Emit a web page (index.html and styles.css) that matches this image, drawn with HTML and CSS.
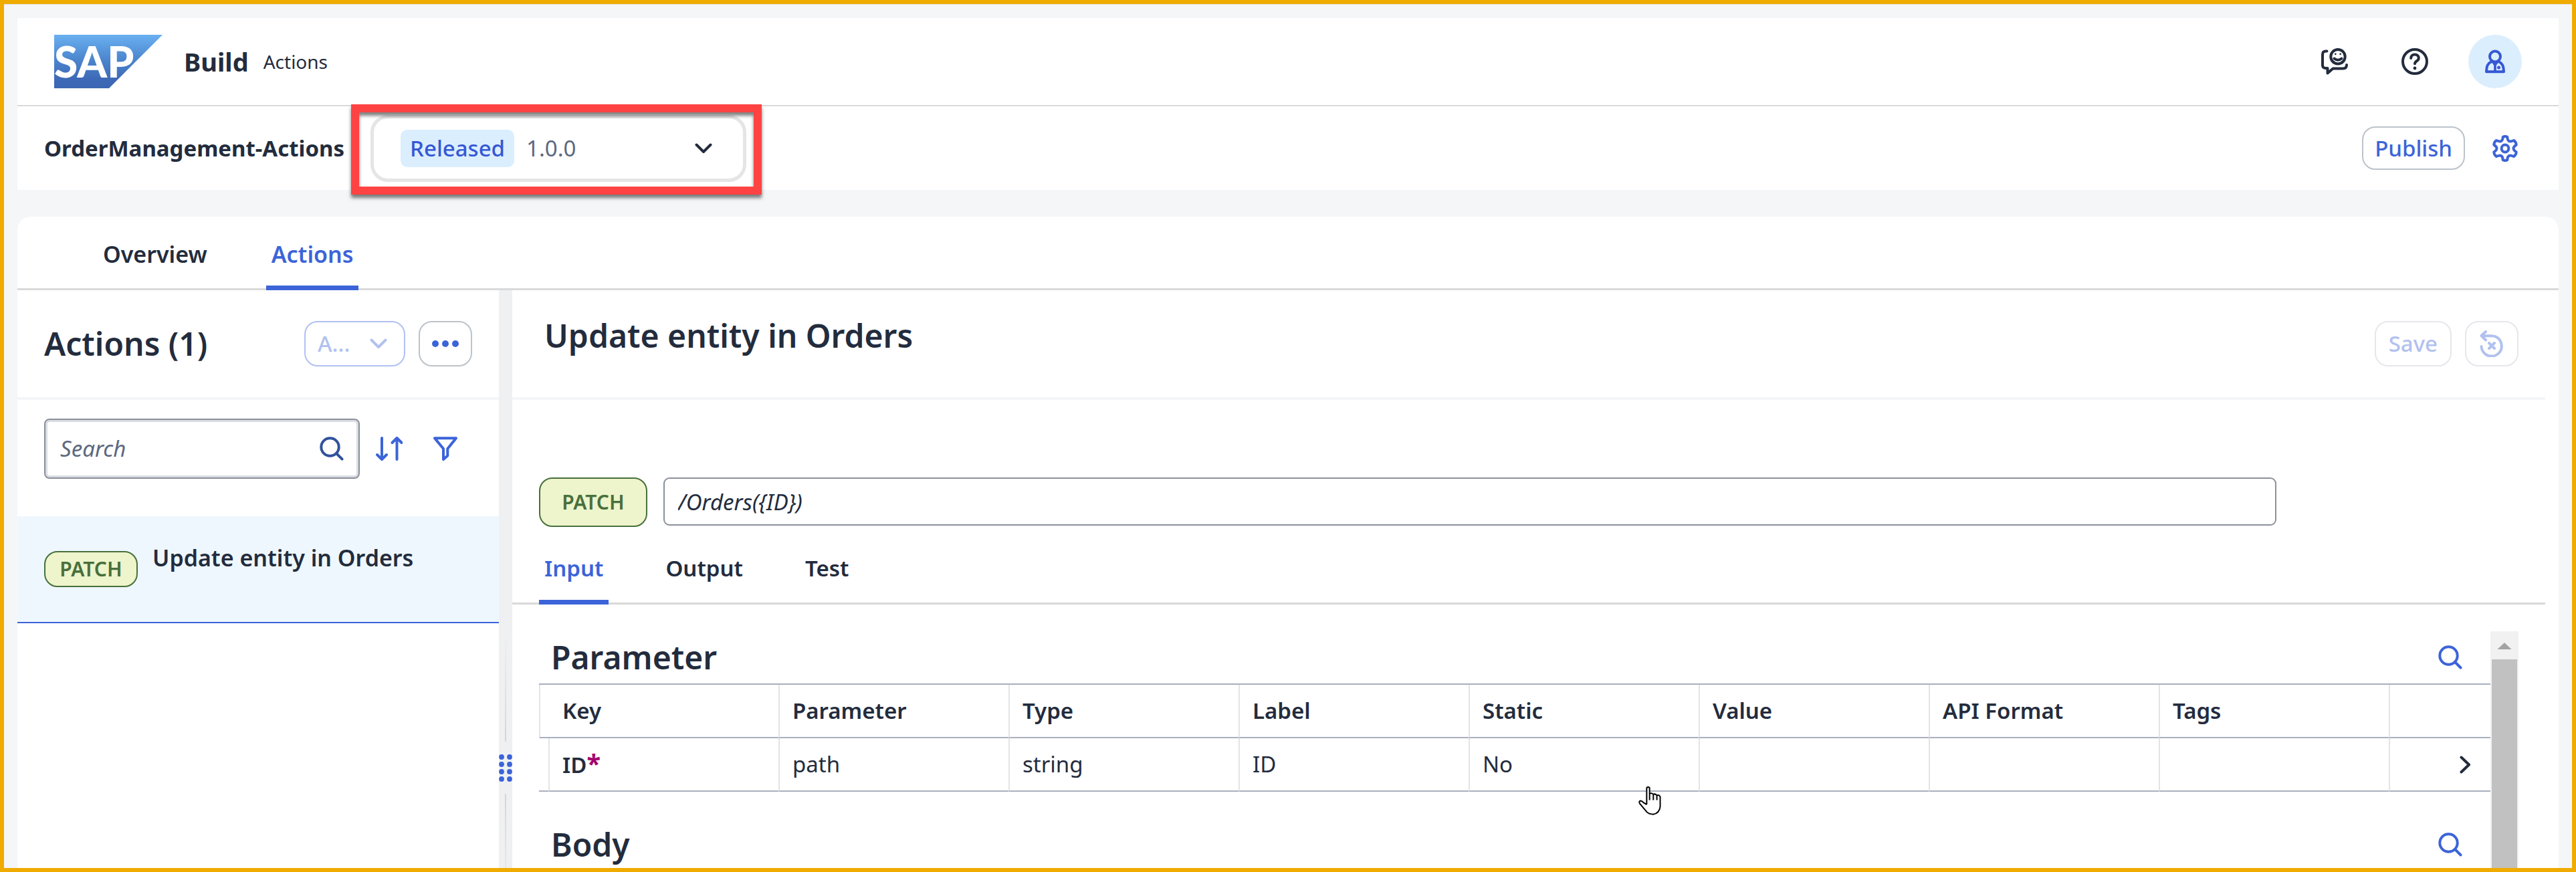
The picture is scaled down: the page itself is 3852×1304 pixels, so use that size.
FILE: index.html
```html
<!DOCTYPE html>
<html lang="en">
<head>
<meta charset="utf-8">
<title>SAP Build Actions - OrderManagement-Actions</title>
<link rel="stylesheet" href="styles.css">
</head>
<body>
<svg class="defs" aria-hidden="true">
  <symbol id="i-search" viewBox="0 0 36 36"><circle cx="15.5" cy="15.5" r="13.2"/><path d="M25 25l8.5 8.5"/></symbol>
  <symbol id="i-chevron" viewBox="0 0 26 16"><path d="M2.5 2.5L13 13 23.500 2.500"/></symbol>
</svg>

<div class="shell">
  <header class="shellbar">
    <svg class="logo" viewBox="0 0 162 80" role="img" aria-label="SAP">
      <defs><linearGradient id="sap" x1="0" y1="0" x2="0" y2="1"><stop offset="0" stop-color="#69b0f1"/><stop offset=".5" stop-color="#4a83cb"/><stop offset=".85" stop-color="#3d68b5"/><stop offset="1" stop-color="#3c66b3"/></linearGradient></defs>
      <path fill="url(#sap)" d="M0 0H162L82 80H0z"/>
      <text class="logo-text" x="0" y="64">SAP</text>
    </svg>
    <span class="product">Build</span>
    <span class="product-area">Actions</span>
    <nav class="shell-tools" aria-label="Shell">
      <button class="shell-tool" aria-label="Feedback">
        <svg class="icon" width="40" height="40" viewBox="0 0 40 40"><path d="M8.500 4.500H7Q2 4.500 2 9.500V25.500Q2 30 7 30H9.500V37.500L17.500 30.500H32.500Q38 30.500 38 25"/><circle cx="25" cy="12.700" r="10.700"/><path d="M19.500 15.500Q25 20 30.500 15.500"/><circle class="dot" cx="21.300" cy="8.800" r="1.400"/><circle class="dot" cx="28.700" cy="8.800" r="1.400"/></svg>
      </button>
      <button class="shell-tool" aria-label="Help">
        <svg class="icon" width="40" height="40" viewBox="0 0 40 40"><circle cx="20" cy="20" r="18"/><path d="M14.200 15C14.200 7.500 25.800 7.500 25.800 15C25.800 19.500 20 19 20 23.300"/><circle class="dot" cx="20" cy="30" r="2.400"/></svg>
      </button>
      <button class="avatar" aria-label="Profile">
        <svg class="icon" width="30" height="36" viewBox="0 0 30 36"><circle cx="15" cy="10.500" r="8"/><path d="M9 18.500C4 20.500 2 25 2 33.300H28C28 25 26 20.500 21 18.500"/><path class="dot" d="M8.500 17.500H21.500L15 26zM13.200 20H16.800V33H13.200z"/><circle class="dot" cx="20.500" cy="27" r="2.500"/></svg>
      </button>
    </nav>
  </header>

  <div class="projectbar">
    <h1 class="project">OrderManagement-Actions</h1>
    <div class="version">
      <span class="state">Released</span>
      <select class="version-select" aria-label="Version"><option>1.0.0</option></select>
      <svg class="icon" width="26" height="16"><use href="#i-chevron"/></svg>
      <span class="callout"></span>
    </div>
    <div class="project-tools">
      <button class="btn btn-publish">Publish</button>
      <button class="btn-plain blue" aria-label="Settings">
        <svg class="icon" width="38" height="40" viewBox="0 0 38 40"><circle cx="19" cy="20" r="5.400"/><path d="M15.700 2.800Q19 1.200 22.300 2.800Q22.500 8.500 25.500 9.300Q27 10 32 8Q35.500 10.300 35.700 14.500Q31.500 17.500 31.500 20Q31.500 22.500 35.700 25.500Q35.500 29.700 32 32Q27 30 25.500 30.700Q22.500 31.500 22.300 37.200Q19 38.800 15.700 37.200Q15.500 31.500 12.500 30.700Q11 30 6 32Q2.500 29.700 2.300 25.500Q6.500 22.500 6.500 20Q6.500 17.500 2.300 14.500Q2.500 10.300 6 8Q11 10 12.500 9.300Q15.500 8.500 15.700 2.800z"/></svg>
      </button>
    </div>
  </div>

  <div class="page">
    <nav class="tabs page-tabs" aria-label="Project">
      <a class="tab" href="#overview">Overview</a>
      <a class="tab current" href="#actions" aria-current="page">Actions</a>
    </nav>

    <div class="split">
      <aside class="side">
        <div class="pane-head side-head">
          <h2 class="title">Actions (1)</h2>
          <div class="select-add">
            <select class="add-select" aria-label="Add" disabled><option>A...</option></select>
            <svg class="icon" width="26" height="16"><use href="#i-chevron"/></svg>
          </div>
          <button class="btn btn-icon" aria-label="More">
            <svg width="40" height="10" viewBox="0 0 40 10"><circle class="dot" cx="5" cy="5" r="5"/><circle class="dot" cx="20" cy="5" r="5"/><circle class="dot" cx="35" cy="5" r="5"/></svg>
          </button>
        </div>
        <div class="filter-row">
          <div class="search">
            <input class="search-input" type="text" placeholder="Search" aria-label="Search">
            <svg class="icon" width="36" height="36"><use href="#i-search"/></svg>
          </div>
          <button class="btn-plain blue" aria-label="Sort"><svg class="icon" width="40" height="36" viewBox="0 0 40 36"><path d="M9 2V34M2 27L9 34 16 27M31.500 34V2M24.500 9L31.500 2 38.500 9"/></svg></button>
          <button class="btn-plain blue" aria-label="Filter"><svg class="icon" width="36" height="36" viewBox="0 0 36 36"><path d="M2 2.200H34L21.300 18V28.500L15 34V18z"/></svg></button>
        </div>
        <a class="action-item" href="#update">
          <span class="method">PATCH</span>
          <span class="action-name">Update entity in Orders</span>
        </a>
      </aside>

      <div class="splitter">
        <span class="line up"></span>
        <svg class="blue" width="20" height="42" viewBox="0 0 20 42"><g class="dot"><circle cx="4" cy="5" r="3.900"/><circle cx="16" cy="5" r="3.900"/><circle cx="4" cy="16" r="3.900"/><circle cx="16" cy="16" r="3.900"/><circle cx="4" cy="27" r="3.900"/><circle cx="16" cy="27" r="3.900"/><circle cx="4" cy="38" r="3.900"/><circle cx="16" cy="38" r="3.900"/></g></svg>
        <span class="line down"></span>
      </div>

      <main class="detail">
        <div class="pane-head detail-head">
          <h2 class="title detail-title">Update entity in Orders</h2>
          <button class="btn off" disabled>Save</button>
          <button class="btn btn-icon off" aria-label="Discard changes" disabled>
            <svg class="icon" width="36" height="40" viewBox="0 0 36 40"><path d="M9 2L2.500 8 9 14.500M3 8.200H18A15.200 15.200 0 1 1 2.500 24M14 19L22 27M22 19L14 27"/></svg>
          </button>
        </div>
        <div class="request">
          <span class="method method-large">PATCH</span>
          <input class="path" type="text" value="/Orders({ID})" aria-label="Path" readonly>
        </div>
        <nav class="tabs detail-tabs" aria-label="Action">
          <a class="tab current" href="#input" aria-current="true">Input</a>
          <a class="tab" href="#output">Output</a>
          <a class="tab" href="#test">Test</a>
        </nav>
        <div class="scroller">
          <div class="scroll-body">
            <section>
              <div class="section-head">
                <h3 class="title">Parameter</h3>
                <button class="btn-bare blue" aria-label="Search parameters"><svg class="icon" width="36" height="36"><use href="#i-search"/></svg></button>
              </div>
              <table class="params">
                <colgroup><col class="c-mark"><col><col><col><col><col><col><col><col><col class="c-nav"></colgroup>
                <thead>
                  <tr><th class="lead" colspan="2">Key</th><th>Parameter</th><th>Type</th><th>Label</th><th>Static</th><th>Value</th><th>API Format</th><th>Tags</th><th></th></tr>
                </thead>
                <tbody>
                  <tr><td class="mark"></td><td class="key">ID<span class="required">*</span></td><td>path</td><td>string</td><td>ID</td><td>No</td><td></td><td></td><td></td>
                    <td class="nav"><svg class="icon" width="17" height="27" viewBox="0 0 17 27" role="img" aria-label="Details"><path d="M2.500 2.500L14 13.500 2.500 24.500"/></svg></td></tr>
                </tbody>
              </table>
            </section>
            <section>
              <div class="section-head">
                <h3 class="title">Body</h3>
                <button class="btn-bare blue" aria-label="Search body"><svg class="icon" width="36" height="36"><use href="#i-search"/></svg></button>
              </div>
            </section>
          </div>
          <div class="scrollbar" aria-hidden="true">
            <svg class="arrow" width="42" height="42" viewBox="0 0 42 42"><path d="M21 17L31.500 27H10.500z"/></svg>
            <span class="thumb"></span>
          </div>
        </div>
      </main>
    </div>
  </div>
</div>

<svg class="pointer" width="34" height="43" viewBox="0 0 102 130" aria-hidden="true"><path d="M37 82V8Q37 3 43 3Q50 3 50 8V33Q59 28 67 36Q76 31 83 41Q92 36 98 46V92Q94 122 67 126Q48 126 38 116L6 78Q0 68 8 65Q16 65 22 73L37 82M50 33V62M67 36V62M83 41V62"/></svg>
</body>
</html>
```
FILE: styles.css
```css
:root {
  --ink: #232c3d;
  --muted: #5b6880;
  --blue: #3c64d8;
  --line: #d9d9d9;
  --edge: #8b909a;
  --canvas: #f4f6f8;
}

* { box-sizing: border-box; }

body {
  margin: 0;
  height: 100vh;
  overflow: hidden;
  border: 6px solid #f0ab00;
  background: var(--canvas);
  color: var(--ink);
  font: 400 33px/44px "Noto Sans", "Open Sans", sans-serif;
}

h1, h2, h3 { margin: 0; }
a { color: inherit; text-decoration: none; }
button, input, select { font: inherit; color: inherit; }
svg { display: block; flex: none; }

.defs { position: absolute; width: 0; height: 0; }
.icon { fill: none; stroke: currentColor; stroke-width: 4; stroke-linecap: round; stroke-linejoin: round; }
.dot { fill: currentColor; stroke: none; }
.blue { color: var(--blue); }

.shell {
  display: flex;
  flex-direction: column;
  height: 100%;
  padding: 20px 20px 0;
  border-top: 1px solid #e3e3e4;
}

/* Shell bar */
.shellbar {
  display: flex;
  flex: none;
  align-items: center;
  height: 132px;
  padding: 0 55px;
  border-bottom: 2px solid var(--line);
  background: #fff;
}
.logo { width: 162px; height: 80px; }
.logo-text { fill: #fff; font: 900 64px Lato, sans-serif; }
.product { margin-left: 32px; font-size: 38px; font-weight: 700; }
.product-area { margin-left: 22px; font-size: 28px; }
.shell-tools { display: flex; align-items: center; margin-left: auto; }
.shell-tool { margin: 0 60px 0 0; padding: 0 0 0 20px; border: 0; background: none; }
.avatar {
  display: grid;
  place-items: center;
  width: 80px;
  height: 80px;
  padding: 0;
  border: 0;
  border-radius: 50%;
  background: #dbeefe;
  color: #3558d4;
}

/* Project bar */
.projectbar {
  display: flex;
  flex: none;
  align-items: center;
  height: 125px;
  padding: 0 40px;
  background: #fff;
}
.project { font-size: 33px; font-weight: 700; }
.version {
  position: relative;
  display: flex;
  align-items: center;
  gap: 18px;
  width: 562px;
  height: 100px;
  margin-left: 39px;
  padding: 0 46px 0 40px;
  border: 5px solid #e5e5e5;
  border-radius: 26px;
  background: #fff;
}
.state {
  padding: 6px 14px;
  border-radius: 10px;
  background: #dbeefe;
  color: #3558d4;
  font-weight: 500;
}
.version-select, .add-select {
  flex: 1;
  min-width: 0;
  padding: 0;
  border: 0;
  background: none;
  appearance: none;
}
.version-select { color: var(--muted); }
.callout {
  position: absolute;
  inset: -21px -28px -24px -34px;
  border: 12px solid #ff4343;
  box-shadow: 0 5px 5px rgba(0, 0, 0, .5), inset 0 5px 5px rgba(0, 0, 0, .5);
  pointer-events: none;
}
.project-tools { display: flex; align-items: center; gap: 20px; margin-left: auto; }

/* Buttons */
.btn {
  height: 68px;
  padding: 0 19px;
  border: 2px solid #bcc3ca;
  border-radius: 20px;
  background: #fff;
  color: var(--blue);
  font-weight: 500;
}
.btn-publish { height: 65px; padding: 0 17px; }
.btn-icon { display: grid; place-items: center; width: 80px; padding: 0; }
.btn.off { border-color: #e5e7eb; color: #b1c1ef; }
.btn-plain {
  display: grid;
  flex: none;
  place-items: center;
  width: 80px;
  height: 68px;
  padding: 0;
  border: 0;
  background: none;
}
.btn-bare { padding: 0; border: 0; background: none; }

/* Tabs */
.tabs { display: flex; box-shadow: inset 0 -3px var(--line); }
.tab { padding: 0 8px 25px; border-bottom: 7px solid transparent; font-weight: 600; }
.tab.current {
  background: linear-gradient(var(--blue), var(--blue)) bottom / 100% 7px no-repeat border-box;
  border-radius: 6px 6px 0 0;
  color: var(--blue);
}
.page-tabs { flex: none; gap: 80px; padding: 34px 120px 0; font-size: 34px; }
.detail-tabs { gap: 77px; padding: 40px 40px 0; }

/* Page */
.page {
  display: flex;
  flex: 1;
  flex-direction: column;
  min-height: 0;
  margin-top: 40px;
  border-radius: 20px 20px 0 0;
  background: #fff;
}
.split { display: flex; flex: 1; min-height: 0; }
.title { font-size: 48px; line-height: 60px; font-weight: 600; }
.pane-head {
  display: flex;
  align-items: center;
  gap: 20px;
  height: 164px;
  border-bottom: 4px solid var(--canvas);
}
.pane-head .title { margin-right: auto; }

/* Action list */
.side { flex: none; width: 720px; }
.side-head { padding: 0 40px; }
.select-add {
  display: flex;
  align-items: center;
  width: 151px;
  height: 68px;
  padding: 0 25px 0 18px;
  border: 2px solid #b1c1f3;
  border-radius: 20px;
  color: #b1c1ef;
}
.add-select { opacity: 1; font-weight: 500; }
.filter-row { display: flex; align-items: center; gap: 4px; padding: 28px 40px 56px; }
.search {
  display: flex;
  flex: 1;
  align-items: center;
  min-width: 0;
  height: 90px;
  padding: 0 22px;
  border: 2px solid var(--edge);
  border-radius: 8px;
  box-shadow: inset 0 0 0 3px #d9dce1;
  color: #30529c;
}
.search-input {
  flex: 1;
  min-width: 0;
  padding: 0;
  border: 0;
  outline: 0;
  background: none;
  color: var(--ink);
}
.search-input::placeholder { color: var(--muted); font-style: italic; opacity: 1; }
.action-item {
  display: flex;
  align-items: flex-start;
  gap: 22px;
  height: 160px;
  padding: 40px 40px 0;
  border-bottom: 2px solid var(--blue);
  background: #eff7fe;
}
.action-name { font-size: 34px; font-weight: 600; }
.method {
  display: grid;
  place-items: center;
  flex: none;
  width: 140px;
  height: 54px;
  margin-top: 12px;
  border: 2px solid #47703c;
  border-radius: 20px;
  background: #eef4cb;
  color: #47703c;
  font-size: 30px;
  font-weight: 600;
}
.method-large { width: 162px; height: 74px; margin-top: 0; }

/* Splitter */
.splitter {
  display: flex;
  flex: none;
  flex-direction: column;
  align-items: center;
  gap: 18px;
  width: 20px;
  padding-top: 516px;
  background: #eff0f2;
  overflow: hidden;
}
.line { flex: none; width: 2px; height: 159px; }
.up { background: linear-gradient(transparent, #d3d5d8); }
.down { background: linear-gradient(#d3d5d8, transparent); }

/* Detail */
.detail { display: flex; flex: 1; flex-direction: column; min-width: 0; margin-right: 20px; }
.detail-head { flex: none; padding: 0 40px 0 48px; }
.detail-title { align-self: flex-start; margin-top: 38px; }
.request { display: flex; gap: 24px; padding: 116px 402px 0 40px; }
.path {
  flex: 1;
  min-width: 0;
  height: 72px;
  padding: 0 20px;
  border: 2px solid var(--edge);
  border-radius: 9px;
  background: #fff;
  font-style: italic;
}
.scroller { display: flex; flex: 1; min-height: 0; padding: 40px 40px 0; }
.scroll-body {
  display: flex;
  flex: 1;
  flex-direction: column;
  gap: 40px;
  min-width: 0;
  overflow: hidden;
}
.section-head {
  display: flex;
  align-items: center;
  justify-content: space-between;
  height: 78px;
  padding: 0 42px 0 18px;
}
.params {
  width: 100%;
  table-layout: fixed;
  border-spacing: 0;
  border-top: 2px solid #a9b0be;
}
.c-mark { width: 14px; }
.c-nav { width: 152px; }
.params th, .params td {
  height: 80px;
  padding: 0 19px;
  border-bottom: 2px solid #a9b0be;
  border-left: 2px solid #e3e4e6;
  text-align: left;
}
.params th { font-weight: 600; }
.params .lead { padding-left: 33px; }
.params .mark { padding: 0; border-left: 0; }
.params .key { font-weight: 600; }
.params .nav { padding-right: 29px; }
.nav .icon { margin-left: auto; }
.required { color: #a3006c; font-weight: 700; font-size: 38px; line-height: 40px; }

.scrollbar { display: flex; flex: none; flex-direction: column; width: 42px; background: #f1f1f1; }
.arrow { fill: #a3a3a3; }
.thumb { flex: 1; margin: 0 2px; background: #c1c1c1; }

.pointer {
  position: absolute;
  top: 1176px;
  left: 2450px;
  fill: #fff;
  stroke: #000;
  stroke-width: 6;
  stroke-linejoin: round;
}
```
